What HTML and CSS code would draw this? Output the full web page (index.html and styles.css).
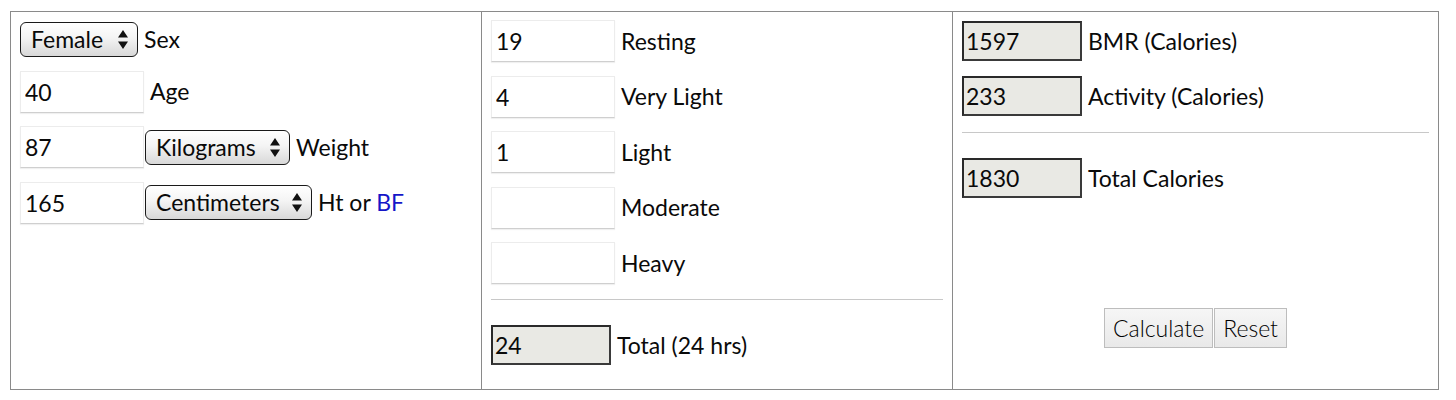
FILE: index.html
```html
<!DOCTYPE html>
<html lang="en">
<head>
<meta charset="utf-8">
<title>Calorie Calculator</title>
<link rel="stylesheet" href="styles.css">
</head>
<body>
<form class="calc">
  <div class="col col-person">
    <div class="row row-sex">
      <span class="select sel-sex">Female
        <svg class="arrows" width="10" height="19" viewBox="0 0 10 19"><path d="M5 0 L10 7.5 L0 7.5 Z M0 11.5 L10 11.5 L5 19 Z" fill="#111"/></svg>
      </span>
      <span class="label">Sex</span>
    </div>
    <div class="row">
      <input class="field" type="text" value="40">
      <span class="label">Age</span>
    </div>
    <div class="row">
      <input class="field" type="text" value="87">
      <span class="select sel-kg">Kilograms
        <svg class="arrows" width="10" height="19" viewBox="0 0 10 19"><path d="M5 0 L10 7.5 L0 7.5 Z M0 11.5 L10 11.5 L5 19 Z" fill="#111"/></svg>
      </span>
      <span class="label">Weight</span>
    </div>
    <div class="row">
      <input class="field" type="text" value="165">
      <span class="select sel-cm">Centimeters
        <svg class="arrows" width="10" height="19" viewBox="0 0 10 19"><path d="M5 0 L10 7.5 L0 7.5 Z M0 11.5 L10 11.5 L5 19 Z" fill="#111"/></svg>
      </span>
      <span class="label">Ht or <a class="link" href="#">BF</a></span>
    </div>
  </div>

  <div class="col col-activity">
    <div class="stack">
      <div class="row"><input class="field" type="text" value="19"><span class="label">Resting</span></div>
      <div class="row"><input class="field" type="text" value="4"><span class="label">Very Light</span></div>
      <div class="row"><input class="field" type="text" value="1"><span class="label">Light</span></div>
      <div class="row"><input class="field" type="text" value=""><span class="label">Moderate</span></div>
      <div class="row"><input class="field" type="text" value=""><span class="label">Heavy</span></div>
    </div>
    <hr class="rule rule-activity">
    <div class="row"><input class="field out" type="text" value="24" readonly><span class="label">Total (24 hrs)</span></div>
  </div>

  <div class="col col-result">
    <div class="stack stack-result">
      <div class="row"><input class="field out" type="text" value="1597" readonly><span class="label">BMR (Calories)</span></div>
      <div class="row"><input class="field out" type="text" value="233" readonly><span class="label">Activity (Calories)</span></div>
    </div>
    <hr class="rule rule-result">
    <div class="row"><input class="field out" type="text" value="1830" readonly><span class="label">Total Calories</span></div>
    <div class="buttons">
      <button type="button" class="btn">Calculate</button><button type="reset" class="btn">Reset</button>
    </div>
  </div>
</form>
</body>
</html>
```

FILE: styles.css
```css
* { box-sizing: border-box; }

body {
  margin: 0;
  background: #fff;
  color: #0a0a0a;
  font-family: Lato, "Liberation Sans", sans-serif;
  font-size: 23px;
}

.calc {
  margin: 11px 0 0 10px;
  width: 1429px;
  height: 379px;
  border: 1px solid #8a8a8a;
  display: grid;
  grid-template-columns: 470px 471px 1fr;
}

.col {
  display: flex;
  flex-direction: column;
  padding: 10px 9px 0 9px;
}

.col + .col { border-left: 1px solid #8a8a8a; }

.col-person { gap: 13.5px; }
.col-activity { padding-top: 8px; }
.col-result { padding-top: 9px; }

.row {
  display: flex;
  align-items: center;
  gap: 6px;
}

.stack {
  display: flex;
  flex-direction: column;
  gap: 13.5px;
}

.stack-result { gap: 15px; }

.label { line-height: 1; white-space: nowrap; }

.field {
  width: 124px;
  height: 42px;
  margin: 0;
  padding: 0 4px;
  font: inherit;
  color: #0a0a0a;
  background: #fff;
  border: 1px solid #ececec;
  border-bottom-color: #cfcfcf;
  border-radius: 0;
  box-shadow: 0 1px 1px rgba(0,0,0,0.06);
  outline: none;
}

.field.out {
  width: 120px;
  height: 40px;
  padding: 0 2px;
  background: #e9e9e4;
  border: 2px solid #2a2a2a;
  border-right-color: #3a3a3a;
  border-bottom-color: #3a3a3a;
  box-shadow: none;
}

.field + .select { margin-left: -5px; }

.select {
  display: inline-flex;
  align-items: center;
  justify-content: space-between;
  gap: 10px;
  height: 35px;
  padding: 0 9px 0 10px;
  border: 1.5px solid #1a1a1a;
  border-radius: 6px;
  background: linear-gradient(#ffffff, #f4f4f4 45%, #d8d8d8);
  white-space: nowrap;
  line-height: 1;
}

.sel-sex { width: 118px; }
.sel-kg { width: 145px; }
.sel-cm { width: 167px; }

.arrows { flex: none; }

.link { color: #1515c8; text-decoration: none; }

.rule {
  border: 0;
  border-top: 1px solid #c8c8c8;
  margin: 0;
  height: 0;
}

.rule-activity { margin: 15px 0 25px; }
.rule-result { margin: 16px 0 25px; }

.buttons {
  display: flex;
  justify-content: center;
  margin-top: 110px;
}

.btn {
  height: 40px;
  margin: 0;
  padding: 0 8px;
  font: inherit;
  font-weight: 300;
  color: #000;
  background: linear-gradient(#f6f6f6, #e9e9e9);
  border: 1px solid #bdbdbd;
  border-radius: 0;
}

.btn + .btn { margin-left: 1px; }
```
